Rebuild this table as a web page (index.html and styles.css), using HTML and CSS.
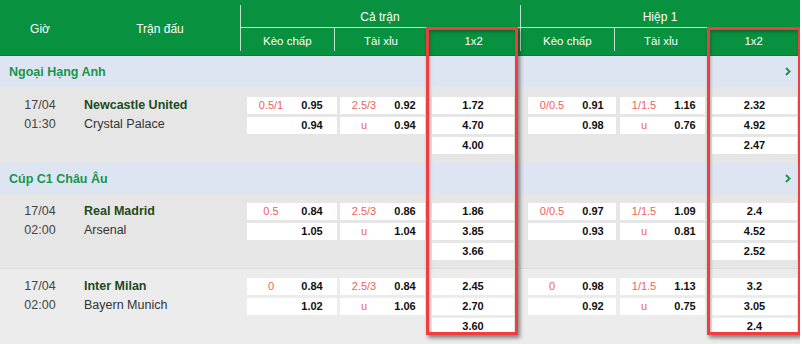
FILE: index.html
```html
<!DOCTYPE html>
<html lang="vi">
<head>
<meta charset="utf-8">
<title>Kèo bóng đá</title>
<link rel="stylesheet" href="styles.css">
</head>
<body>
<div class="board">
  <div class="head">
    <div class="h-time">Giờ</div>
    <div class="h-match">Trận đấu</div>
    <div class="h-group">
      <div class="h-title">Cả trận</div>
      <div class="h-subs"><div class="h-sub">Kèo chấp</div><div class="h-sub">Tài xỉu</div><div class="h-sub">1x2</div></div>
    </div>
    <div class="h-group">
      <div class="h-title">Hiệp 1</div>
      <div class="h-subs"><div class="h-sub">Kèo chấp</div><div class="h-sub">Tài xỉu</div><div class="h-sub">1x2</div></div>
    </div>
  </div>

  <div class="league"><span>Ngoại Hạng Anh</span><svg class="chev" width="6" height="9" viewBox="0 0 6 9"><polyline points="1,1 4.5,4.5 1,8" fill="none" stroke="#1a9a4c" stroke-width="2"/></svg></div>
  <div class="match first">
    <div class="time"><div>17/04</div><div>01:30</div></div>
    <div class="teams"><div class="home">Newcastle United</div><div class="away">Crystal Palace</div></div>
    <div class="grp g1">
      <div class="stack ah"><div class="cell split"><span class="hc">0.5/1</span><span class="od">0.95</span></div><div class="cell split"><span class="hc"></span><span class="od">0.94</span></div></div>
      <div class="stack ou"><div class="cell split"><span class="hc">2.5/3</span><span class="od">0.92</span></div><div class="cell split"><span class="hc">u</span><span class="od">0.94</span></div></div>
      <div class="stack x12"><div class="cell">1.72</div><div class="cell">4.70</div><div class="cell">4.00</div></div>
    </div>
    <div class="grp g2">
      <div class="stack ah"><div class="cell split"><span class="hc">0/0.5</span><span class="od">0.91</span></div><div class="cell split"><span class="hc"></span><span class="od">0.98</span></div></div>
      <div class="stack ou"><div class="cell split"><span class="hc">1/1.5</span><span class="od">1.16</span></div><div class="cell split"><span class="hc">u</span><span class="od">0.76</span></div></div>
      <div class="stack x12"><div class="cell">2.32</div><div class="cell">4.92</div><div class="cell">2.47</div></div>
    </div>
  </div>

  <div class="league"><span>Cúp C1 Châu Âu</span><svg class="chev" width="6" height="9" viewBox="0 0 6 9"><polyline points="1,1 4.5,4.5 1,8" fill="none" stroke="#1a9a4c" stroke-width="2"/></svg></div>
  <div class="match">
    <div class="time"><div>17/04</div><div>02:00</div></div>
    <div class="teams"><div class="home">Real Madrid</div><div class="away">Arsenal</div></div>
    <div class="grp g1">
      <div class="stack ah"><div class="cell split"><span class="hc">0.5</span><span class="od">0.84</span></div><div class="cell split"><span class="hc"></span><span class="od">1.05</span></div></div>
      <div class="stack ou"><div class="cell split"><span class="hc">2.5/3</span><span class="od">0.86</span></div><div class="cell split"><span class="hc">u</span><span class="od">1.04</span></div></div>
      <div class="stack x12"><div class="cell">1.86</div><div class="cell">3.85</div><div class="cell">3.66</div></div>
    </div>
    <div class="grp g2">
      <div class="stack ah"><div class="cell split"><span class="hc">0/0.5</span><span class="od">0.97</span></div><div class="cell split"><span class="hc"></span><span class="od">0.93</span></div></div>
      <div class="stack ou"><div class="cell split"><span class="hc">1/1.5</span><span class="od">1.09</span></div><div class="cell split"><span class="hc">u</span><span class="od">0.81</span></div></div>
      <div class="stack x12"><div class="cell">2.4</div><div class="cell">4.52</div><div class="cell">2.52</div></div>
    </div>
  </div>
  <div class="match next">
    <div class="time"><div>17/04</div><div>02:00</div></div>
    <div class="teams"><div class="home">Inter Milan</div><div class="away">Bayern Munich</div></div>
    <div class="grp g1">
      <div class="stack ah"><div class="cell split"><span class="hc">0</span><span class="od">0.84</span></div><div class="cell split"><span class="hc"></span><span class="od">1.02</span></div></div>
      <div class="stack ou"><div class="cell split"><span class="hc">2.5/3</span><span class="od">0.84</span></div><div class="cell split"><span class="hc">u</span><span class="od">1.06</span></div></div>
      <div class="stack x12"><div class="cell">2.45</div><div class="cell">2.70</div><div class="cell">3.60</div></div>
    </div>
    <div class="grp g2">
      <div class="stack ah"><div class="cell split"><span class="hc">0</span><span class="od">0.98</span></div><div class="cell split"><span class="hc"></span><span class="od">0.92</span></div></div>
      <div class="stack ou"><div class="cell split"><span class="hc">1/1.5</span><span class="od">1.13</span></div><div class="cell split"><span class="hc">u</span><span class="od">0.75</span></div></div>
      <div class="stack x12"><div class="cell">3.2</div><div class="cell">3.05</div><div class="cell">2.4</div></div>
    </div>
  </div>

  <div class="mark mark1"></div>
  <div class="mark mark2"></div>
</div>
</body>
</html>
```
FILE: styles.css
```css
* { box-sizing: border-box; }
html, body { margin: 0; padding: 0; background: #ffffff; }
body { font-family: "Liberation Sans", Arial, sans-serif; }

.board { position: relative; width: 800px; height: 344px; overflow: hidden; background: #ececec; }

.head {
  display: flex;
  height: 56px;
  background: #08913f;
  border-bottom: 1px solid #0a7d37;
  color: #ffffff;
  font-size: 12px;
}
.h-time { width: 80px; display: flex; align-items: center; justify-content: center; padding-top: 3px; }
.h-match { width: 160px; display: flex; align-items: center; justify-content: center; padding-top: 3px; }
.h-group {
  width: 280px;
  margin: 5px 0 4px;
  border-left: 1px solid rgba(255,255,255,0.75);
  display: flex;
  flex-direction: column;
}
.h-title {
  height: 23px;
  border-bottom: 1px solid rgba(255,255,255,0.75);
  display: flex;
  align-items: center;
  justify-content: center;
  padding-top: 1px;
  margin-left: -1px;
}
.h-subs { display: flex; flex: 1; }
.h-sub {
  display: flex; align-items: center; justify-content: center;
  font-size: 11.5px;
  padding-top: 2px;
}
.h-sub:nth-child(1) { width: 93px; }
.h-sub:nth-child(2) { width: 94px; border-left: 1px solid rgba(255,255,255,0.75); }
.h-sub:nth-child(3) { width: 93px; }

.league {
  height: 31px;
  background: #dee5f2;
  display: flex;
  align-items: center;
  justify-content: space-between;
  padding: 1px 9px 0 9px;
  color: #16964a;
  font-weight: bold;
  font-size: 12.5px;
}
.chev { margin-right: 0; margin-top: -2px; }

.match {
  display: flex;
  background: #e6e6e6;
  padding: 9px 0 8px;
}
.match.first { padding: 10px 0 9px; }
.match.next { background: #ececec; border-top: 1px solid #dcdcdc; }

.time {
  width: 80px;
  text-align: center;
  color: #444444;
  font-size: 12.5px;
  line-height: 19px;
  margin-top: -1px;
}
.teams {
  width: 160px;
  padding-left: 4px;
  font-size: 12.5px;
  line-height: 19px;
  margin-top: -1px;
  color: #333333;
}
.home { font-weight: bold; color: #1d4a22; }

.grp { width: 280px; display: flex; align-items: flex-start; }
.g1 { padding-left: 7px; }
.g2 { padding-left: 8px; }
.stack { display: flex; flex-direction: column; gap: 3px; }
.g1 .ah { width: 90px; margin-right: 3px; }
.g2 .ah { width: 88px; margin-right: 4px; }
.ou { width: 85px; margin-right: 7px; }
.g1 .x12 { width: 82px; }
.g2 .x12 { width: 85px; }

.cell {
  height: 17px;
  background: #ffffff;
  font-size: 11px;
  font-weight: bold;
  color: #111111;
  line-height: 17px;
  text-align: center;
}
.cell.split { display: grid; grid-template-columns: 48px 34px 1fr; }
.hc { color: #f0625c; font-weight: normal; }

.mark {
  position: absolute;
  top: 27px;
  height: 308px;
  border: 3px solid #f13d3d;
  box-shadow: 2px 3px 4px rgba(0,0,0,0.45), inset 1px 2px 3px rgba(0,0,0,0.25);
}
.mark1 { left: 426px; width: 92px; }
.mark2 { left: 707px; width: 94px; }
```
